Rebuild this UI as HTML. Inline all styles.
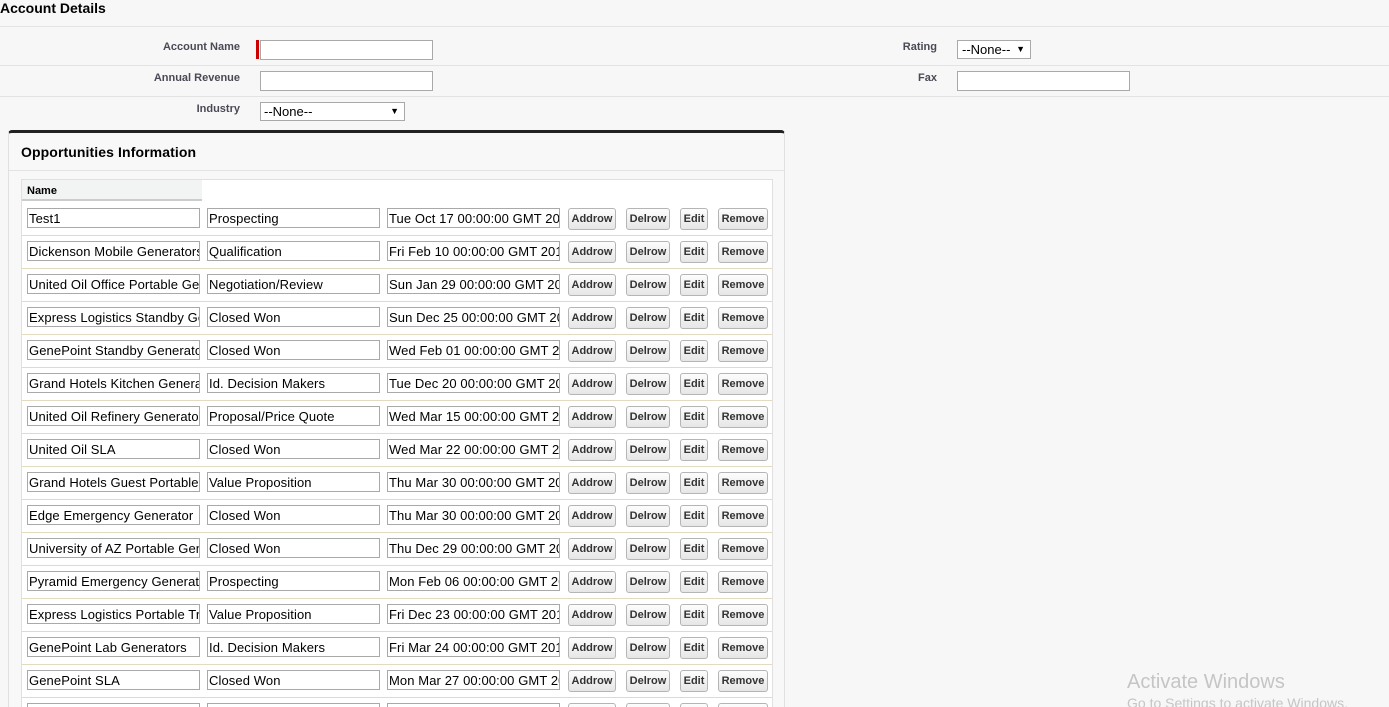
<!DOCTYPE html>
<html style="width:1389px;height:707px;overflow:hidden"><head><style>
body{margin:0;width:1389px;height:707px;overflow:hidden;background:#f7f7f7;font-family:Arial,"Liberation Sans",sans-serif;position:relative}
.a{position:absolute}
.lbl{font-size:11px;font-weight:bold;color:#4a4a56;text-align:right}
.in{position:absolute;height:19px;border:1px solid #a9a9a9;background:#fff;box-sizing:border-box}
.hl{position:absolute;left:0;width:1389px;height:1px;background:#e3e3e3}
.t{position:absolute;height:20px;border:1px solid #a9a9a9;background:#fff;box-sizing:border-box;font-size:13px;line-height:19px;padding-left:1px;white-space:nowrap;overflow:hidden;color:#000;letter-spacing:0.1px}
.b{position:absolute;height:22px;border:1px solid #b5b5b5;border-radius:3px;background:linear-gradient(#fdfdfd,#e6e6e6);box-sizing:border-box;font-size:11px;font-weight:bold;color:#333;text-align:center;line-height:21px}
.sep{position:absolute;left:22px;width:750px;height:1px;background:#e2dbbd}
</style></head><body>
<div class="a" style="left:0;top:0px;font-size:14px;font-weight:bold;color:#000">Account Details</div>
<div class="hl" style="top:26px"></div>
<div class="hl" style="top:65px"></div>
<div class="hl" style="top:96px"></div>
<div class="a lbl" style="right:1149px;top:41px">Account Name</div>
<div class="a" style="left:256px;top:40px;width:3px;height:19px;background:#c00"></div>
<div class="in" style="left:260px;top:40px;width:173px;height:20px"></div>
<div class="a lbl" style="right:1149px;top:72px">Annual Revenue</div>
<div class="in" style="left:260px;top:71px;width:173px;height:20px"></div>
<div class="a lbl" style="right:1149px;top:103px">Industry</div>
<div class="in" style="left:260px;top:102px;width:145px;font-size:13px;line-height:17px;padding-left:3px">--None--<span style="position:absolute;right:5px;font-size:9px">▼</span></div>
<div class="a lbl" style="right:452px;top:41px">Rating</div>
<div class="in" style="left:957px;top:40px;width:74px;font-size:13px;line-height:17px;padding-left:4px">--None--<span style="position:absolute;right:5px;font-size:9px">▼</span></div>
<div class="a lbl" style="right:452px;top:72px">Fax</div>
<div class="in" style="left:957px;top:71px;width:173px;height:20px"></div>

<div class="a" style="left:8px;top:130px;width:777px;height:577px;background:#f8f8f8;border-left:1px solid #e0e0e0;border-right:1px solid #e0e0e0;border-top:3px solid #222;border-radius:4px 4px 0 0;box-sizing:border-box"></div>
<div class="a" style="left:21px;top:144px;font-size:14px;font-weight:bold;color:#000;letter-spacing:0.1px">Opportunities Information</div>
<div class="a" style="left:9px;top:170px;width:775px;height:1px;background:#e3e3e3"></div>
<div class="a" style="left:21px;top:179px;width:752px;height:528px;background:#fff;border:1px solid #e0e0e0;border-bottom:none;box-sizing:border-box"></div>
<div class="a" style="left:22px;top:180px;width:180px;height:21px;background:#f2f3f3;border-bottom:2px solid #ccc;font-size:11px;font-weight:bold;line-height:22px;padding-left:5px;box-sizing:border-box">Name</div>
<div id="rows"></div>
<div class="a" style="left:1127px;top:671px;font-size:20px;color:#c5c5c5">Activate Windows</div>
<div class="a" style="left:1127px;top:695px;font-size:14px;color:#c5c5c5">Go to Settings to activate Windows.</div>
<script>
var d=[["Test1","Prospecting","Tue Oct 17 00:00:00 GMT 2017"],["Dickenson Mobile Generators","Qualification","Fri Feb 10 00:00:00 GMT 2017"],["United Oil Office Portable Generators","Negotiation/Review","Sun Jan 29 00:00:00 GMT 2017"],["Express Logistics Standby Generator","Closed Won","Sun Dec 25 00:00:00 GMT 2016"],["GenePoint Standby Generator","Closed Won","Wed Feb 01 00:00:00 GMT 2017"],["Grand Hotels Kitchen Generator","Id. Decision Makers","Tue Dec 20 00:00:00 GMT 2016"],["United Oil Refinery Generators","Proposal/Price Quote","Wed Mar 15 00:00:00 GMT 2017"],["United Oil SLA","Closed Won","Wed Mar 22 00:00:00 GMT 2017"],["Grand Hotels Guest Portable Generators","Value Proposition","Thu Mar 30 00:00:00 GMT 2017"],["Edge Emergency Generator","Closed Won","Thu Mar 30 00:00:00 GMT 2017"],["University of AZ Portable Generators","Closed Won","Thu Dec 29 00:00:00 GMT 2016"],["Pyramid Emergency Generators","Prospecting","Mon Feb 06 00:00:00 GMT 2017"],["Express Logistics Portable Truck Generators","Value Proposition","Fri Dec 23 00:00:00 GMT 2016"],["GenePoint Lab Generators","Id. Decision Makers","Fri Mar 24 00:00:00 GMT 2017"],["GenePoint SLA","Closed Won","Mon Mar 27 00:00:00 GMT 2017"],["","",""]];
var h="";
d.forEach(function(r,i){var y=208+33*i;
h+='<div class="t" style="left:27px;top:'+y+'px;width:173px">'+r[0]+'</div>';
h+='<div class="t" style="left:207px;top:'+y+'px;width:173px">'+r[1]+'</div>';
h+='<div class="t" style="left:387px;top:'+y+'px;width:173px">'+r[2]+'</div>';
var by=y;
h+='<div class="b" style="left:568px;top:'+by+'px;width:48px">Addrow</div>';
h+='<div class="b" style="left:626px;top:'+by+'px;width:44px">Delrow</div>';
h+='<div class="b" style="left:680px;top:'+by+'px;width:28px">Edit</div>';
h+='<div class="b" style="left:718px;top:'+by+'px;width:50px">Remove</div>';
h+='<div class="sep" style="top:'+(y+27)+'px"></div>';});
document.getElementById("rows").innerHTML=h;
</script>
</body></html>
